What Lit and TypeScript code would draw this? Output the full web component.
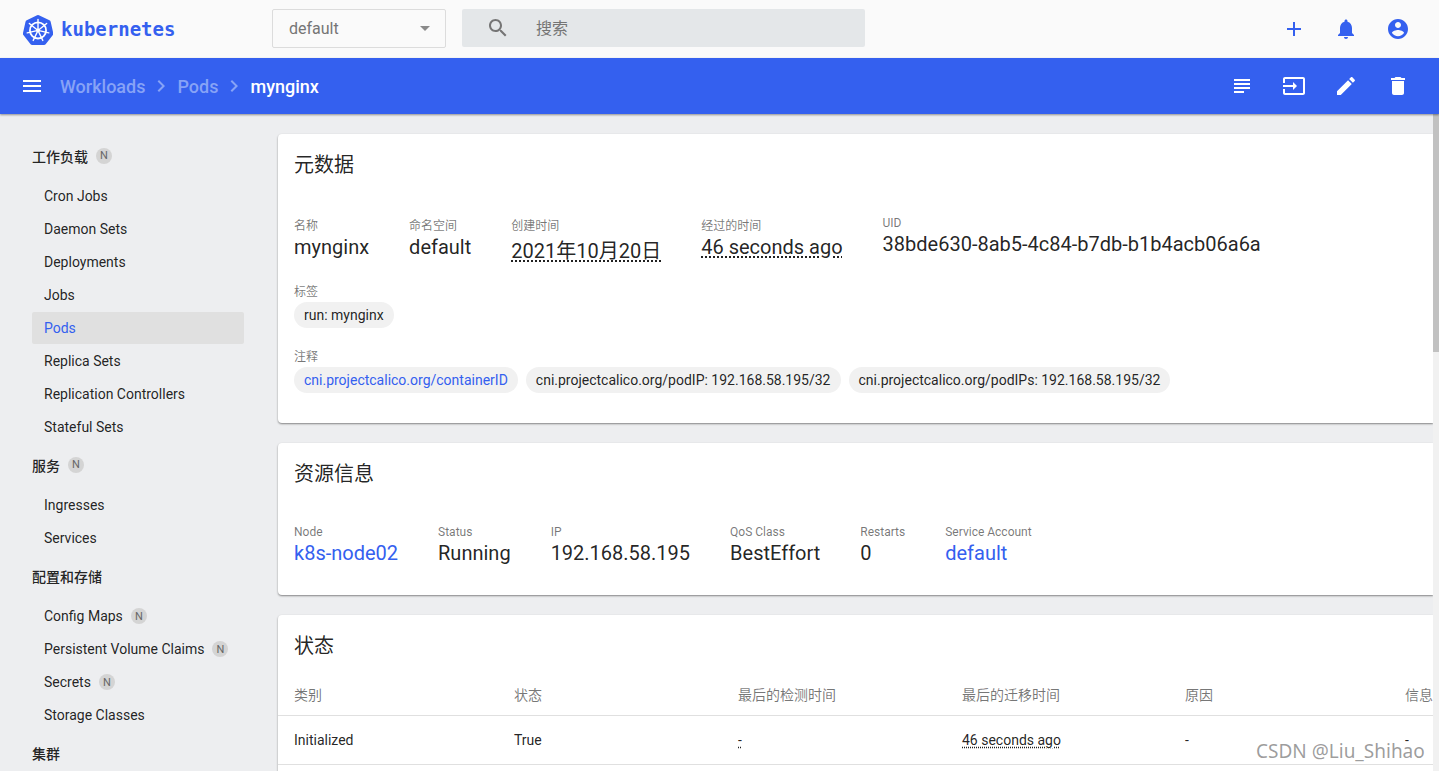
import { LitElement, html, css, svg } from "lit";
import { customElement } from "lit/decorators.js";

const ICONS: Record<string, string> = {
  menu: "M3 18h18v-2H3v2zm0-5h18v-2H3v2zm0-7v2h18V6H3z",
  chevron: "M10 6L8.59 7.41 13.17 12l-4.58 4.59L10 18l6-6z",
  search:
    "M15.5 14h-.79l-.28-.27C15.41 12.59 16 11.11 16 9.5 16 5.91 13.09 3 9.5 3S3 5.91 3 9.5 5.91 16 9.5 16c1.61 0 3.09-.59 4.23-1.57l.27.28v.79l5 4.99L20.49 19l-4.99-5zm-6 0C7.01 14 5 11.99 5 9.5S7.01 5 9.5 5 14 7.01 14 9.5 11.99 14 9.5 14z",
  add: "M19 13h-6v6h-2v-6H5v-2h6V5h2v6h6v2z",
  bell: "M12 22c1.1 0 2-.9 2-2h-4c0 1.1.89 2 2 2zm6-6v-5c0-3.07-1.64-5.64-4.5-6.32V4c0-.83-.67-1.5-1.5-1.5s-1.5.67-1.5 1.5v.68C7.63 5.36 6 7.92 6 11v5l-2 2v1h16v-1l-2-2z",
  account:
    "M12 2C6.48 2 2 6.48 2 12s4.48 10 10 10 10-4.48 10-10S17.52 2 12 2zm0 3c1.66 0 3 1.34 3 3s-1.34 3-3 3-3-1.34-3-3 1.34-3 3-3zm0 14.2c-2.5 0-4.71-1.28-6-3.22.03-1.99 4-3.08 6-3.08 1.99 0 5.97 1.09 6 3.08-1.29 1.94-3.5 3.22-6 3.22z",
  subject: "M14 17H4v2h10v-2zm6-8H4v2h16V9zM4 15h16v-2H4v2zM4 5v2h16V5H4z",
  input:
    "M21 3.01H3c-1.1 0-2 .9-2 2V9h2V4.99h18v14.03H3V15H1v4.01c0 1.1.9 1.98 2 1.98h18c1.1 0 2-.88 2-1.98v-14c0-1.11-.9-2-2-2zM11 16l4-4-4-4v3H1v2h10v3z",
  edit: "M3 17.25V21h3.75L17.81 9.94l-3.75-3.75L3 17.25zM20.71 7.04c.39-.39.39-1.02 0-1.41l-2.34-2.34c-.39-.39-1.02-.39-1.41 0l-1.83 1.83 3.75 3.75 1.83-1.83z",
  delete: "M6 19c0 1.1.9 2 2 2h8c1.1 0 2-.9 2-2V7H6v12zM19 4h-3.5l-1-1h-5l-1 1H5v2h14V4z",
};

const icon = (name: string) =>
  html`<svg class="icon" viewBox="0 0 24 24"><path d=${ICONS[name]}></path></svg>`;

const spokes = [0, 51.4, 102.9, 154.3, 205.7, 257.1, 308.6];

const logo = html`<svg class="logo" viewBox="0 0 32 32">
  <path
    fill="#3460ef"
    d="M16 0.6 a2.4 2.4 0 0 1 1 .24l11.2 5.4a2.4 2.4 0 0 1 1.3 1.6l2.8 12.1a2.4 2.4 0 0 1-.46 2l-7.7 9.7a2.4 2.4 0 0 1-1.9.9H10a2.4 2.4 0 0 1-1.9-.9l-7.7-9.7a2.4 2.4 0 0 1-.46-2L2.7 7.84a2.4 2.4 0 0 1 1.3-1.6L15 .84A2.4 2.4 0 0 1 16 .6z"
  ></path>
  <circle cx="16" cy="17" r="8.6" fill="none" stroke="#fff" stroke-width="1.9"></circle>
  <circle cx="16" cy="17" r="2" fill="#fff"></circle>
  ${spokes.map(
    (a) => svg`<line x1="16" y1="17" x2="16" y2="5.2" stroke="#fff" stroke-width="1.5" stroke-linecap="round" transform="rotate(${a} 16 17)"></line>`
  )}
</svg>`;

const NAV = [
  { title: "工作负载", badge: true, items: [
    { label: "Cron Jobs" },
    { label: "Daemon Sets" },
    { label: "Deployments" },
    { label: "Jobs" },
    { label: "Pods", active: true },
    { label: "Replica Sets" },
    { label: "Replication Controllers" },
    { label: "Stateful Sets" },
  ] },
  { title: "服务", badge: true, items: [{ label: "Ingresses" }, { label: "Services" }] },
  { title: "配置和存储", badge: false, items: [
    { label: "Config Maps", badge: true },
    { label: "Persistent Volume Claims", badge: true },
    { label: "Secrets", badge: true },
    { label: "Storage Classes" },
  ] },
  { title: "集群", badge: false, items: [] },
];

@customElement("app-root")
export class AppRoot extends LitElement {
  static styles = css`
    :host {
      display: block;
      position: relative;
      height: 771px;
      overflow: hidden;
      background: #edeef0;
      color: rgba(0, 0, 0, 0.87);
      font-family: Roboto, "Noto Sans CJK SC", sans-serif;
      --blue: #3460ef;
    }

    .icon {
      width: 24px;
      height: 24px;
      flex: none;
      fill: currentColor;
      display: block;
    }

    .top {
      height: 58px;
      background: #fafafa;
      display: flex;
      align-items: center;
    }

    .brand {
      width: 272px;
      padding-left: 23px;
      box-sizing: border-box;
      display: flex;
      align-items: center;
      gap: 8px;
      flex: none;
    }

    .logo {
      width: 30px;
      height: 31px;
    }

    .brand-name {
      font-family: "DejaVu Sans Mono", monospace;
      font-weight: 700;
      font-size: 19px;
      color: var(--blue);
    }

    .select {
      width: 174px;
      height: 39px;
      box-sizing: border-box;
      border: 1px solid #dcdcdc;
      border-radius: 2px;
      padding: 0 15px 0 16px;
      display: flex;
      align-items: center;
      justify-content: space-between;
      font-size: 16px;
      color: #757575;
      margin: 0 16px 2px 0;
    }

    .caret {
      width: 0;
      height: 0;
      border-left: 5px solid transparent;
      border-right: 5px solid transparent;
      border-top: 5px solid #8a8a8a;
    }

    .search {
      width: 403px;
      height: 38px;
      margin-bottom: 2px;
      border-radius: 2px;
      background: #e4e7e9;
      display: flex;
      align-items: center;
      padding-left: 24px;
      box-sizing: border-box;
      gap: 26px;
      font-size: 16px;
      color: #757575;
    }

    .search span {
      padding-bottom: 2px;
    }

    .actions {
      margin-left: auto;
      padding-right: 29px;
      display: flex;
      gap: 28px;
      color: var(--blue);
    }

    .bar {
      position: relative;
      height: 56px;
      background: var(--blue);
      color: #fff;
      display: flex;
      align-items: center;
      padding-left: 20px;
      box-shadow: 0 1px 2px rgba(0, 0, 0, 0.4);
    }

    .crumbs {
      margin-left: 16px;
      display: flex;
      align-items: center;
      font-size: 18px;
      font-weight: 500;
      color: #87a3f6;
    }

    .crumbs .icon {
      margin: 0 4px;
    }

    .crumbs .current {
      color: #fff;
    }

    .bar .actions {
      color: #fff;
    }

    .body {
      display: flex;
      height: 657px;
    }

    .side {
      width: 256px;
      flex: none;
      box-sizing: border-box;
      padding: 21px 12px 0 32px;
    }

    .side-title {
      height: 45px;
      box-sizing: border-box;
      padding-bottom: 4px;
      display: flex;
      align-items: center;
      font-size: 14px;
      font-weight: 500;
    }

    .side-item {
      height: 32px;
      margin-bottom: 1px;
      padding-left: 12px;
      border-radius: 2px;
      display: flex;
      align-items: center;
      font-size: 14px;
    }

    .side-item.active {
      background: #e0e0e0;
      color: var(--blue);
    }

    .badge {
      width: 16px;
      height: 16px;
      margin-left: 8px;
      border-radius: 50%;
      background: #d4d4d4;
      color: #666;
      font-size: 11px;
      font-weight: 400;
      display: flex;
      align-items: center;
      justify-content: center;
    }

    .main {
      flex: 1;
      min-width: 0;
      padding: 20px 0 0 22px;
      display: flex;
      flex-direction: column;
      gap: 20px;
      overflow: hidden;
    }

    .card {
      flex: none;
      background: #fff;
      border-radius: 4px 0 0 4px;
      box-shadow: 0 1px 2px rgba(0, 0, 0, 0.45);
      overflow: hidden;
    }

    .card-title {
      margin: 0;
      padding: 17px 16px 0;
      height: 28px;
      line-height: 28px;
      font-size: 20px;
      font-weight: 400;
    }

    .meta {
      padding: 37px 16px 30px;
    }

    .res {
      padding: 37px 16px 30px;
    }

    .fields {
      display: flex;
      gap: 40px;
    }

    .label {
      font-size: 12px;
      color: rgba(0, 0, 0, 0.54);
    }

    .value {
      margin-top: 2px;
      font-size: 20px;
    }

    .link {
      color: var(--blue);
    }

    .dotted {
      text-decoration: underline dotted;
      text-underline-offset: 2px;
    }

    .block {
      margin-top: 18px;
    }

    .block + .block {
      margin-top: 19px;
    }

    .chips {
      display: flex;
      gap: 8px;
      margin-top: 3px;
    }

    .chip {
      height: 26px;
      line-height: 26px;
      padding: 0 10px;
      border-radius: 13px;
      background: #f1f1f1;
      font-size: 14px;
    }

    .table {
      margin-top: 15px;
      padding-bottom: 60px;
      font-size: 14px;
    }

    .row {
      display: grid;
      grid-template-columns: 220px 224px 224px 223px 220px 1fr;
      padding-left: 16px;
      height: 48px;
      align-items: center;
      border-bottom: 1px solid #e0e0e0;
      white-space: nowrap;
    }

    .row.head {
      height: 41px;
      box-sizing: border-box;
      padding-bottom: 2px;
      color: rgba(0, 0, 0, 0.54);
    }

    .scrollbar {
      width: 6px;
      flex: none;
      background: #f1f1f1;
    }

    .thumb {
      height: 238px;
      background: #c1c1c1;
    }

    .watermark {
      position: absolute;
      left: 1256px;
      top: 737px;
      font-family: "Noto Sans", sans-serif;
      font-size: 19px;
      line-height: 28px;
      color: rgba(90, 90, 90, 0.6);
    }
  `;

  render() {
    return html`
      <div class="top">
        <div class="brand">${logo}<span class="brand-name">kubernetes</span></div>
        <div class="select"><span>default</span><span class="caret"></span></div>
        <div class="search">${icon("search")}<span>搜索</span></div>
        <div class="actions">${icon("add")}${icon("bell")}${icon("account")}</div>
      </div>
      <div class="bar">
        ${icon("menu")}
        <div class="crumbs">
          <span>Workloads</span>${icon("chevron")}<span>Pods</span>${icon("chevron")}
          <span class="current">mynginx</span>
        </div>
        <div class="actions">${icon("subject")}${icon("input")}${icon("edit")}${icon("delete")}</div>
      </div>
      <div class="body">
        <nav class="side">
          ${NAV.map(
            (g) => html`
              <div class="side-title">${g.title}${g.badge ? html`<span class="badge">N</span>` : ""}</div>
              ${g.items.map(
                (i: any) => html`
                  <div class="side-item ${i.active ? "active" : ""}">
                    ${i.label}${i.badge ? html`<span class="badge">N</span>` : ""}
                  </div>
                `
              )}
            `
          )}
        </nav>
        <main class="main">
          <section class="card">
            <h2 class="card-title">元数据</h2>
            <div class="meta">
              <div class="fields">
                <div><div class="label">名称</div><div class="value">mynginx</div></div>
                <div><div class="label">命名空间</div><div class="value">default</div></div>
                <div><div class="label">创建时间</div><div class="value dotted">2021年10月20日</div></div>
                <div><div class="label">经过的时间</div><div class="value dotted">46 seconds ago</div></div>
                <div><div class="label">UID</div><div class="value">38bde630-8ab5-4c84-b7db-b1b4acb06a6a</div></div>
              </div>
              <div class="block">
                <div class="label">标签</div>
                <div class="chips"><span class="chip">run: mynginx</span></div>
              </div>
              <div class="block">
                <div class="label">注释</div>
                <div class="chips">
                  <span class="chip link">cni.projectcalico.org/containerID</span>
                  <span class="chip">cni.projectcalico.org/podIP: 192.168.58.195/32</span>
                  <span class="chip">cni.projectcalico.org/podIPs: 192.168.58.195/32</span>
                </div>
              </div>
            </div>
          </section>
          <section class="card">
            <h2 class="card-title">资源信息</h2>
            <div class="res">
              <div class="fields">
                <div><div class="label">Node</div><div class="value link">k8s-node02</div></div>
                <div><div class="label">Status</div><div class="value">Running</div></div>
                <div><div class="label">IP</div><div class="value">192.168.58.195</div></div>
                <div><div class="label">QoS Class</div><div class="value">BestEffort</div></div>
                <div><div class="label">Restarts</div><div class="value">0</div></div>
                <div><div class="label">Service Account</div><div class="value link">default</div></div>
              </div>
            </div>
          </section>
          <section class="card">
            <h2 class="card-title">状态</h2>
            <div class="table">
              <div class="row head">
                <span>类别</span><span>状态</span><span>最后的检测时间</span>
                <span>最后的迁移时间</span><span>原因</span><span>信息</span>
              </div>
              <div class="row">
                <span>Initialized</span><span>True</span><span><span class="dotted">-</span></span>
                <span><span class="dotted">46 seconds ago</span></span><span>-</span><span>-</span>
              </div>
            </div>
          </section>
        </main>
        <div class="scrollbar"><div class="thumb"></div></div>
      </div>
      <div class="watermark">CSDN @Liu_Shihao</div>
    `;
  }
}
